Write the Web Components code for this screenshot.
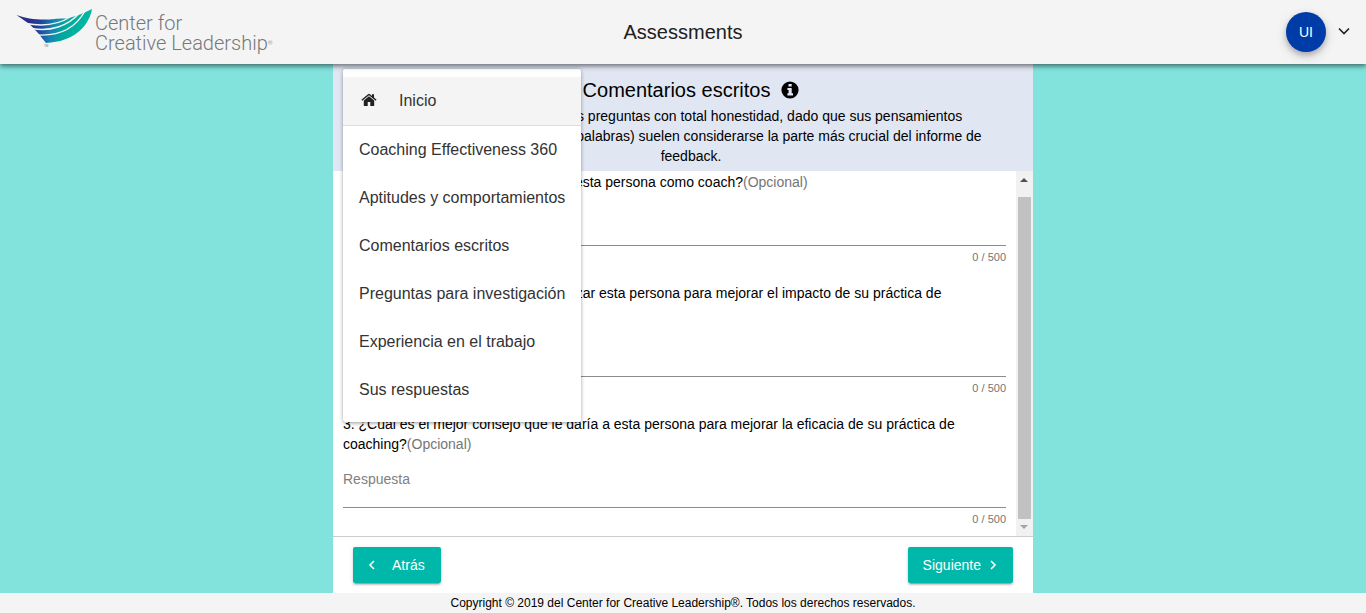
<!DOCTYPE html>
<html lang="es">
<head>
<meta charset="utf-8">
<meta name="viewport" content="width=device-width, initial-scale=1">
<title>Assessments</title>
<style>
  body {
    margin: 0;
    font: 14px/20px "Liberation Sans", Arial, sans-serif;
    color: #000;
    background: #82e2dc;
    --bar: #f4f4f4;
    --accent: #00b8a9;
    --muted: #757575;
  }
</style>
</head>
<body>
<app-shell>
  <app-header slot="header" heading="Assessments" initials="UI"></app-header>
  <survey-card heading="Comentarios escritos">
    <span slot="intro">Responda a las siguientes preguntas con total honestidad, dado que sus pensamientos (expresados en sus propias palabras) suelen considerarse la parte más crucial del informe de feedback.</span>
    <nav-menu slot="menu">
      <menu-entry home>Inicio</menu-entry>
      <menu-entry>Coaching Effectiveness 360</menu-entry>
      <menu-entry>Aptitudes y comportamientos</menu-entry>
      <menu-entry>Comentarios escritos</menu-entry>
      <menu-entry>Preguntas para investigación</menu-entry>
      <menu-entry>Experiencia en el trabajo</menu-entry>
      <menu-entry>Sus respuestas</menu-entry>
    </nav-menu>
    <survey-question>1. ¿Cuáles son los puntos fuertes de esta persona como coach?</survey-question>
    <survey-question>2. ¿Qué métodos concretos debe utilizar esta persona para mejorar el impacto de su práctica de coaching?</survey-question>
    <survey-question>3. ¿Cuál es el mejor consejo que le daría a esta persona para mejorar la eficacia de su práctica de coaching?</survey-question>
    <nav-button slot="actions" direction="back">Atrás</nav-button>
    <nav-button slot="actions" direction="next">Siguiente</nav-button>
  </survey-card>
  <span slot="footer">Copyright © 2019 del Center for Creative Leadership®. Todos los derechos reservados.</span>
</app-shell>

<script>
  const define = (name, html, setup) => {
    const template = document.createElement('template');
    template.innerHTML = html;
    customElements.define(name, class extends HTMLElement {
      connectedCallback() {
        if (this.shadowRoot) return;
        const root = this.attachShadow({ mode: 'open' });
        root.append(template.content.cloneNode(true));
        if (setup) setup(root, this);
      }
    });
  };

  define('app-shell', `
    <style>
      :host { display: flex; flex-direction: column; height: 100vh; }
      main { flex: 1; min-height: 0; display: flex; justify-content: center; }
      footer { background: var(--bar); text-align: center; font-size: 12px; line-height: 20px; }
    </style>
    <slot name="header"></slot>
    <main><slot></slot></main>
    <footer><slot name="footer"></slot></footer>
  `);

  define('ccl-logo', `
    <style>
      :host { display: flex; gap: 1px; color: #74797b; }
      svg { width: 78px; height: 44px; overflow: visible; }
      .name { display: flex; flex-direction: column; padding-top: 3px; font: 300 20px/20px Roboto, "Open Sans", sans-serif; white-space: nowrap; }
      sup { font-size: 6px; line-height: 6px; vertical-align: 5px; }
    </style>
    <svg viewBox="16 10 78 44" aria-hidden="true">
      <defs>
        <linearGradient id="g" gradientUnits="userSpaceOnUse" x1="30" y1="24" x2="84" y2="36">
          <stop offset="0" stop-color="#2b2f8c"/><stop offset=".2" stop-color="#1f45a0"/>
          <stop offset=".42" stop-color="#1486b0"/><stop offset=".62" stop-color="#00a99d"/><stop offset="1" stop-color="#00b8a0"/>
        </linearGradient>
      </defs>
      <path fill="url(#g)" d="M16.500 15C26 18.500 36 20 50 19.500C54 19 58 18.500 65 18.500C75 17 84 13 92 9C90 22 78 40 51 42.500L46 43L38 33L30 24.500Z"/>
      <g fill="none" stroke="#f4f4f4" stroke-width="1.400">
        <path d="M26 23.500C42 26.500 58 25 71 16.500"/>
        <path d="M32 28.500C50 32 68 26 79 13.500"/>
        <path d="M38 35C58 36 75 29 85 11"/>
      </g>
      <text x="44" y="47" font-family="Liberation Sans" font-size="3" fill="#777">TM</text>
    </svg>
    <div class="name"><span>Center for</span><span>Creative Leadership<sup>®</sup></span></div>
  `);

  define('app-header', `
    <style>
      :host { display: block; position: relative; z-index: 2; background: var(--bar); box-shadow: 0 2px 5px rgba(0,0,0,.55); }
      header { display: grid; grid-template-columns: 1fr auto 1fr; align-items: center; min-height: 64px; padding: 0 16px; }
      h1 { margin: 0; font-size: 20px; line-height: 28px; font-weight: 400; color: #212121; }
      button { justify-self: end; display: flex; align-items: center; gap: 12px; border: 0; padding: 0; background: none; font: inherit; color: #212121; }
      .avatar { display: grid; place-items: center; width: 40px; height: 40px; border-radius: 50%; background: #003ca8; color: #fff; box-shadow: 0 3px 5px rgba(0,0,0,.2), 0 4px 12px rgba(0,0,0,.16); }
      svg { width: 12px; height: 10px; }
    </style>
    <header>
      <ccl-logo></ccl-logo>
      <h1></h1>
      <button type="button" aria-haspopup="menu"><span class="avatar"></span>
        <svg viewBox="0 0 12 10" fill="none" stroke="currentColor" stroke-width="1.6" aria-hidden="true"><path d="M1 1.5L6 6.5L11 1.5"/></svg>
      </button>
    </header>
  `, (root, el) => {
    root.querySelector('h1').textContent = el.getAttribute('heading');
    root.querySelector('.avatar').textContent = el.getAttribute('initials');
  });

  define('scroll-rail', `
    <style>
      :host { display: flex; flex-direction: column; width: 17px; background: #f1f1f1; }
      svg { width: 17px; height: 17px; fill: #505050; }
      svg.end { fill: #a3a3a3; }
      .track { flex: 1; display: flex; padding: 9px 2px 0; }
      .thumb { flex: 1; background: #c1c1c1; }
    </style>
    <svg viewBox="0 0 17 17"><path d="M4 11h8l-4-4z"/></svg>
    <div class="track"><div class="thumb"></div></div>
    <svg class="end" viewBox="0 0 17 17"><path d="M4 6h8l-4 4z"/></svg>
  `);

  define('survey-card', `
    <style>
      :host { position: relative; display: flex; flex-direction: column; width: 100%; max-width: 700px; background: #fff; }
      .intro { background: #e0e7f3; padding: 12px 42px 5px 58px; text-align: center; }
      h2 { display: flex; align-items: center; justify-content: center; gap: 11px; margin: 0 0 2px; font-size: 20px; line-height: 28px; font-weight: 400; }
      h2 svg { width: 18px; height: 18px; }
      p { margin: 0; }
      .body { flex: 1; min-height: 0; display: flex; }
      .questions { flex: 1; min-width: 0; overflow: hidden; display: flex; flex-direction: column; padding: 1px 10px 0; }
      .actions { display: flex; justify-content: space-between; border-top: 1px solid #ccc; padding: 10px 20px; }
    </style>
    <section class="intro">
      <h2><span class="title"></span>
        <svg viewBox="0 0 18 18" aria-hidden="true"><circle cx="9" cy="9" r="8.6"/><path fill="#e0e7f3" d="M7.5 3h3.2v2.6H7.5zM6.4 7h4.3v5.2h1.3v2.2H6.4v-2.2h1.2V9.1H6.4z"/></svg>
      </h2>
      <p><slot name="intro"></slot></p>
    </section>
    <div class="body">
      <div class="questions"><slot></slot></div>
      <scroll-rail></scroll-rail>
    </div>
    <div class="actions"><slot name="actions"></slot></div>
    <slot name="menu"></slot>
  `, (root, el) => { root.querySelector('.title').textContent = el.getAttribute('heading'); });

  define('survey-question', `
    <style>
      :host { display: block; padding-bottom: 17px; }
      label { display: block; }
      .optional { color: var(--muted); }
      textarea { display: block; box-sizing: border-box; width: 100%; height: 54px; margin: 0; padding: 15px 0 0; border: 0; border-bottom: 1px solid #8c8c8c; background: none; resize: none; overflow: hidden; font: inherit; color: inherit; outline: 0; }
      textarea::placeholder { color: #808080; opacity: 1; }
      .count { padding-top: 2px; text-align: right; font-size: 11px; line-height: 18px; color: var(--muted); }
    </style>
    <label for="answer"><slot></slot><span class="optional">(Opcional)</span></label>
    <textarea id="answer" placeholder="Respuesta" maxlength="500"></textarea>
    <div class="count">0 / 500</div>
  `);

  define('nav-button', `
    <style>
      :host { display: block; }
      button { display: flex; align-items: center; gap: 8px; height: 36px; border: 0; border-radius: 2px; padding: 0 16px 0 15px; background: var(--accent); color: #fff; font: 500 14px/36px "Liberation Sans", Arial, sans-serif; box-shadow: 0 3px 1px -2px rgba(0,0,0,.2), 0 2px 2px rgba(0,0,0,.14), 0 1px 5px rgba(0,0,0,.12); }
      svg { width: 8px; height: 10px; fill: none; stroke: currentColor; stroke-width: 1.6; }
      :host([direction="back"]) button { flex-direction: row-reverse; gap: 16px; }
      :host([direction="back"]) svg { transform: rotate(180deg); }
    </style>
    <button type="button"><span><slot></slot></span>
      <svg viewBox="0 0 8 10" aria-hidden="true"><path d="M2 1L6 5L2 9"/></svg>
    </button>
  `);

  define('nav-menu', `
    <style>
      :host { position: absolute; z-index: 1; top: 5px; left: 10px; display: block; padding: 8px 0; border-radius: 2px; background: #fff; box-shadow: 0 2px 4px -1px rgba(0,0,0,.3), 0 0 4px rgba(0,0,0,.2); }
    </style>
    <slot></slot>
  `);

  define('menu-entry', `
    <style>
      :host { display: block; }
      a { display: flex; align-items: center; height: 48px; padding: 0 16px; font-size: 16px; line-height: 24px; color: #333; text-decoration: none; white-space: nowrap; }
      svg { display: none; }
      :host([home]) a { background: #f4f4f4; border-bottom: 1px solid #ddd; }
      :host([home]) svg { display: block; width: 20px; height: 16px; margin-right: 20px; fill: #212121; }
    </style>
    <a href="#"><svg viewBox="0 1 20 16" aria-hidden="true"><path d="M10 4.3L4.800 8.600V13.400q0 .6.6.6H8.700V10h2.600v4h3.300q.6 0 .6-.6V8.600z"/><path d="M17.600 7.700L15 5.600V2.200H12.900V3.900L11 2.200q-1-.8-2 0L2.400 7.700l.9 1.100L10 3.300l6.700 5.500z"/></svg><slot></slot></a>
  `);
</script>
</body>
</html>
